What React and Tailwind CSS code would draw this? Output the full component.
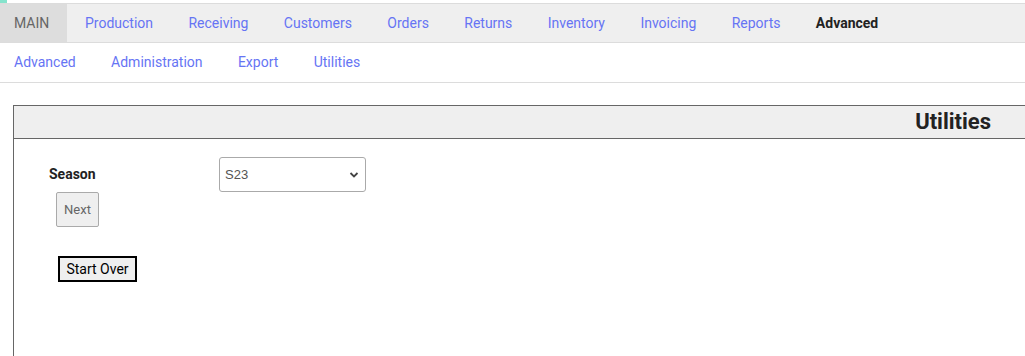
export default function App() {
  const top = ["Production", "Receiving", "Customers", "Orders", "Returns", "Inventory", "Invoicing", "Reports"];
  const sub = ["Advanced", "Administration", "Export", "Utilities"];
  return (
    <div className="relative w-[1025px] h-[356px] overflow-hidden bg-white" style={{ fontFamily: "Roboto, sans-serif" }}>
      <div className="absolute left-0 top-0 w-[7px] h-[3px] bg-[#86e3cc]" />
      <div className="pt-[3px]">
        <div className="flex h-[40px] items-stretch bg-[#efefef] border-t border-b border-[#dcdcdc] text-[14px]">
          <div className="flex items-center bg-[#dddddd] pl-[14px] pr-[18px] text-[#666]">MAIN</div>
          {top.map((t) => (
            <div key={t} className="flex items-center px-[17.7px] text-[#6674f4]">{t}</div>
          ))}
          <div className="flex items-center px-[17.7px] font-bold text-[#222]">Advanced</div>
        </div>
        <div className="flex h-[40px] items-stretch border-b border-[#dcdcdc] text-[14px]">
          {sub.map((t, i) => (
            <div key={t} className={`flex items-center ${i === 0 ? "pl-[14px]" : "pl-[17.7px]"} pr-[17.7px] text-[#6674f4]`}>{t}</div>
          ))}
        </div>
      </div>
      <div className="ml-[13px] mt-[22px] w-[1040px] h-[260px] border border-[#666] border-r-0 border-b-0">
        <div className="h-[33px] bg-[#efefef] border-b border-[#666] flex items-center justify-end pr-[62px]">
          <span className="text-[22px] font-bold text-[#222] leading-none">Utilities</span>
        </div>
        <div className="pl-[35px] pt-[18px]">
          <div className="flex items-start">
            <div className="w-[170px] pt-[7px] text-[14px] font-bold text-[#222]">Season</div>
            <div className="relative w-[147px] h-[35px] border border-[#aaa] rounded-[3px] bg-white flex items-center pl-[5px] text-[13px] text-[#555]" style={{ fontFamily: "'Liberation Sans', Arial, sans-serif" }}>
              S23
              <svg className="absolute right-[6px] top-[13px]" width="10" height="8" viewBox="0 0 10 8">
                <path d="M1.5 2 L5 5.5 L8.5 2" fill="none" stroke="#444" strokeWidth="1.8" />
              </svg>
            </div>
          </div>
          <div className="ml-[7px] w-[43px] h-[35px] bg-[#efefef] border border-[#aaa] rounded-[2px] flex items-center justify-center text-[13px] text-[#666]">Next</div>
          <div className="ml-[9px] mt-[29px] w-[79px] h-[26px] bg-[#efefef] border-2 border-black flex items-center justify-center text-[14px] text-black">Start Over</div>
        </div>
      </div>
    </div>
  );
}
